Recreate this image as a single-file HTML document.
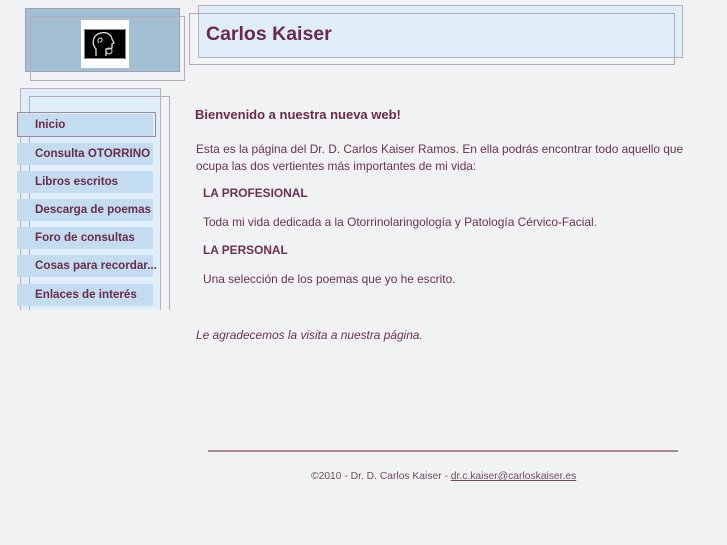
<!DOCTYPE html>
<html><head><meta charset="utf-8"><style>
body{margin:0;width:727px;height:545px;background:#f1f2f4;position:relative;overflow:hidden;font-family:"Liberation Sans",sans-serif;color:#6b3050}
.a{position:absolute;box-sizing:border-box}
.m{position:absolute;left:17px;width:136px;height:22px;background:#c3dcef;font:bold 11.6px "Liberation Sans",sans-serif;color:#6b2a4a;line-height:22px;padding-left:18px;box-sizing:border-box;white-space:nowrap}
p{position:absolute;margin:0;font-size:11.9px;left:196px}
</style></head><body>
<div class="a" style="left:25px;top:8px;width:155px;height:64px;background:#a3bfd3;border:1px solid #9fa0b8"></div>
<div class="a" style="left:30px;top:16px;width:155px;height:65px;border:1px solid #b8a9b8"></div>
<div class="a" style="left:81px;top:20px;width:48px;height:48px;background:#fff"></div>
<svg class="a" style="left:84px;top:29px" width="42" height="30" viewBox="0 0 42 30"><rect x="0.5" y="0.5" width="41" height="29" fill="#000" stroke="#888"/><path d="M12 27V20C8 16 8 8 14 5C20 2 27 4 28 10L30 14L28 15V19C26 20 23 20 22 20V27" fill="none" stroke="#ddd" stroke-width="1.3"/><path d="M15 14C13 12 14 9 17 9C19 10 18 13 16 13" fill="none" stroke="#ddd"/><circle cx="25" cy="22" r="3" fill="none" stroke="#ddd"/></svg>

<div class="a" style="left:198px;top:5px;width:485px;height:53px;background:#dfeef9;border:1px solid #b7afc4"></div>
<div class="a" style="left:189px;top:13px;width:486px;height:52px;border:1px solid #b3a8b8"></div>
<div class="a" style="left:206px;top:23px;font:bold 19.5px 'Liberation Sans',sans-serif;color:#6b2a4a">Carlos Kaiser</div>

<div class="a" style="left:20px;top:88px;width:141px;height:222px;background:#dfeef9;border:1px solid #bcaec0;border-bottom:none"></div>
<div class="a" style="left:29px;top:96px;width:141px;height:214px;border:1px solid #b8a8b8;border-bottom:none"></div>
<div class="m" style="top:114px">Inicio</div>
<div class="a" style="left:17px;top:112px;width:139px;height:25px;border:1px solid #9a8aa0"></div>
<div class="m" style="top:143px">Consulta OTORRINO</div>
<div class="m" style="top:171px">Libros escritos</div>
<div class="m" style="top:199px">Descarga de poemas</div>
<div class="m" style="top:227px">Foro de consultas</div>
<div class="m" style="top:255px">Cosas para recordar...</div>
<div class="m" style="top:284px">Enlaces de interés</div>

<div class="a" style="left:195px;top:107px;font:bold 13px 'Liberation Sans',sans-serif;color:#6b2a4a">Bienvenido a nuestra nueva web!</div>
<p style="top:141px;width:500px;line-height:17px">Esta es la página del Dr. D. Carlos Kaiser Ramos. En ella podrás encontrar todo aquello que ocupa las dos vertientes más importantes de mi vida:</p>
<p style="top:186px;left:203px;font-weight:bold">LA PROFESIONAL</p>
<p style="top:215px;left:203px">Toda mi vida dedicada a la Otorrinolaringología y Patología Cérvico-Facial.</p>
<p style="top:243px;left:203px;font-weight:bold">LA PERSONAL</p>
<p style="top:272px;left:203px">Una selección de los poemas que yo he escrito.</p>
<p style="top:328px;font-style:italic">Le agradecemos la visita a nuestra página.</p>
<div class="a" style="left:208px;top:450px;width:470px;height:2px;background:#a88696"></div>
<div class="a" style="left:311px;top:471px;font-size:10.3px;color:#6e4a5e">©2010 - Dr. D. Carlos Kaiser - <u>dr.c.kaiser@carloskaiser.es</u></div>
</body></html>
